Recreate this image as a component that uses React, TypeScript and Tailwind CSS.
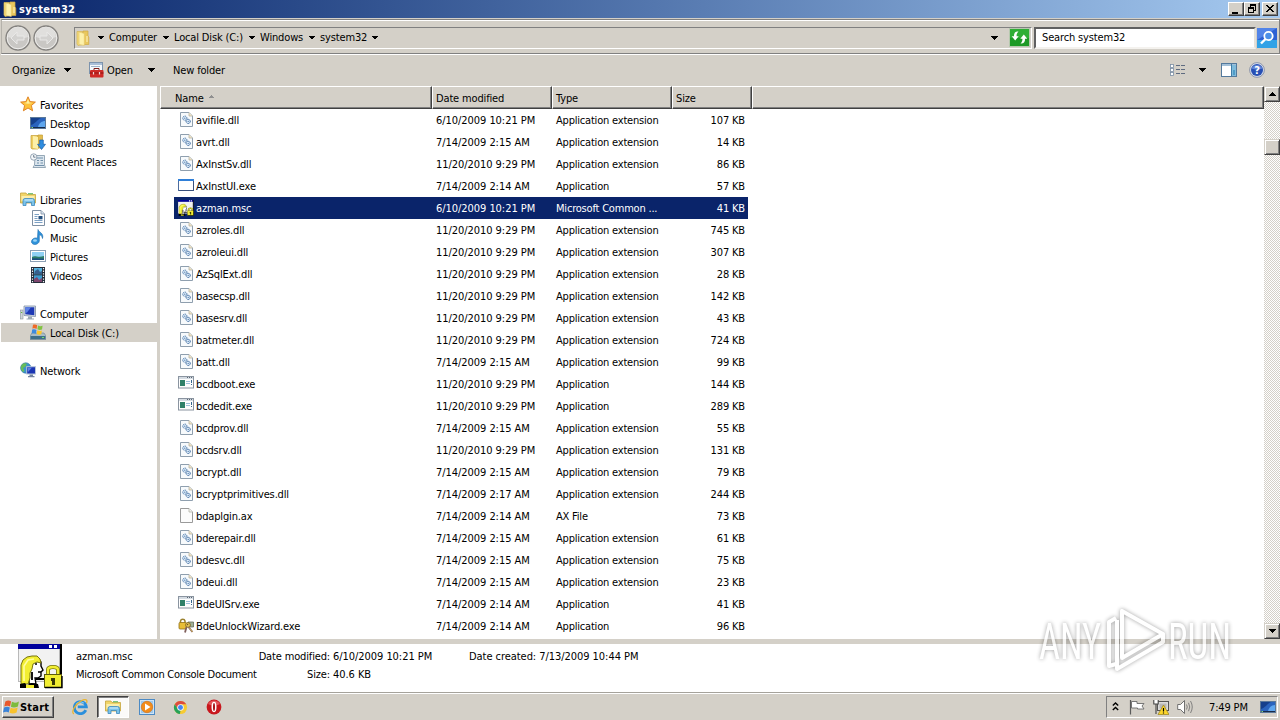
import type { ReactNode } from "react";

type FileKind = "dll" | "window" | "console" | "msc" | "blank" | "lock";

type FileRow = {
  name: string;
  date: string;
  type: string;
  size: string;
  kind: FileKind;
  selected?: boolean;
};

const EXT = "Application extension";
const APP = "Application";

const files: FileRow[] = [
  { name: "avifile.dll", date: "6/10/2009 10:21 PM", type: EXT, size: "107 KB", kind: "dll" },
  { name: "avrt.dll", date: "7/14/2009 2:15 AM", type: EXT, size: "14 KB", kind: "dll" },
  { name: "AxInstSv.dll", date: "11/20/2010 9:29 PM", type: EXT, size: "86 KB", kind: "dll" },
  { name: "AxInstUI.exe", date: "7/14/2009 2:14 AM", type: APP, size: "57 KB", kind: "window" },
  { name: "azman.msc", date: "6/10/2009 10:21 PM", type: "Microsoft Common ...", size: "41 KB", kind: "msc", selected: true },
  { name: "azroles.dll", date: "11/20/2010 9:29 PM", type: EXT, size: "745 KB", kind: "dll" },
  { name: "azroleui.dll", date: "11/20/2010 9:29 PM", type: EXT, size: "307 KB", kind: "dll" },
  { name: "AzSqlExt.dll", date: "11/20/2010 9:29 PM", type: EXT, size: "28 KB", kind: "dll" },
  { name: "basecsp.dll", date: "11/20/2010 9:29 PM", type: EXT, size: "142 KB", kind: "dll" },
  { name: "basesrv.dll", date: "11/20/2010 9:29 PM", type: EXT, size: "43 KB", kind: "dll" },
  { name: "batmeter.dll", date: "11/20/2010 9:29 PM", type: EXT, size: "724 KB", kind: "dll" },
  { name: "batt.dll", date: "7/14/2009 2:15 AM", type: EXT, size: "99 KB", kind: "dll" },
  { name: "bcdboot.exe", date: "11/20/2010 9:29 PM", type: APP, size: "144 KB", kind: "console" },
  { name: "bcdedit.exe", date: "11/20/2010 9:29 PM", type: APP, size: "289 KB", kind: "console" },
  { name: "bcdprov.dll", date: "7/14/2009 2:15 AM", type: EXT, size: "55 KB", kind: "dll" },
  { name: "bcdsrv.dll", date: "11/20/2010 9:29 PM", type: EXT, size: "131 KB", kind: "dll" },
  { name: "bcrypt.dll", date: "7/14/2009 2:15 AM", type: EXT, size: "79 KB", kind: "dll" },
  { name: "bcryptprimitives.dll", date: "7/14/2009 2:17 AM", type: EXT, size: "244 KB", kind: "dll" },
  { name: "bdaplgin.ax", date: "7/14/2009 2:14 AM", type: "AX File", size: "73 KB", kind: "blank" },
  { name: "bderepair.dll", date: "7/14/2009 2:15 AM", type: EXT, size: "61 KB", kind: "dll" },
  { name: "bdesvc.dll", date: "7/14/2009 2:15 AM", type: EXT, size: "75 KB", kind: "dll" },
  { name: "bdeui.dll", date: "7/14/2009 2:15 AM", type: EXT, size: "23 KB", kind: "dll" },
  { name: "BdeUISrv.exe", date: "7/14/2009 2:14 AM", type: APP, size: "41 KB", kind: "console" },
  { name: "BdeUnlockWizard.exe", date: "7/14/2009 2:14 AM", type: APP, size: "96 KB", kind: "lock" },
];

function Icon({ size = 16, children }: { size?: number; children: ReactNode }) {
  return (
    <svg width={size} height={size} viewBox="0 0 16 16" className="block shrink-0">
      {children}
    </svg>
  );
}

function Down({ w = 7 }: { w?: number }) {
  return (
    <svg width={w} height={4} viewBox="0 0 7 4" className="block shrink-0" shapeRendering="crispEdges">
      <path d="M0 0H7V1H6V2H5V3H4V4H3V3H2V2H1V1H0Z" fill="#000" />
    </svg>
  );
}

/* ---------- file icons ---------- */

function MscIcon({ size }: { size: number }) {
  return (
    <svg width={size} height={size} viewBox="0 0 45 45" className="block shrink-0">
      <rect x="0" y="0" width="43" height="38" fill="#b9b9b9" />
      <rect x="1" y="5" width="40" height="32" fill="#f2f2f2" />
      <rect x="0" y="0" width="43" height="5" fill="#00009c" />
      <path d="M31 1H34V4H31ZM36 1H39V4H36Z" fill="#fff" />
      <path d="M42 0H44V38H42Z" fill="#000" />
      <path d="M13 18L20 15L23 18V22L25 26L23 28V32L20 34H17L18 40H11V28Z" fill="#fff" stroke="#000" strokeWidth="1.4" />
      <path d="M17 20H19M20 28H23" stroke="#000" strokeWidth="1.4" />
      <path
        d="M3 40V21L5 16L9 13L14 12H19L22 15L23 19L19 18L15 20L14 25L12 29V34L10 40Z"
        fill="#f2ee32"
        stroke="#77750d"
        strokeWidth="1"
      />
      <path d="M6 37V22L10 16L16 15" fill="none" stroke="#fffda0" strokeWidth="1.6" />
      <path d="M18 35H27M14 28V36" stroke="#000" strokeWidth="1.8" />
      <path d="M2 40L7 39L9 42L13 39L20 40L21 44H2Z" fill="#000" />
      <path d="M8 41H16V44H8Z" fill="#f2ee32" />
      <path d="M30 31V26Q30 23 35 23Q40 23 40 26V31" fill="none" stroke="#77750d" strokeWidth="4" />
      <path d="M30 31V26Q30 23 35 23Q40 23 40 26V31" fill="none" stroke="#f2ee32" strokeWidth="2.4" />
      <rect x="26.5" y="30.5" width="17" height="13" fill="#f2ee32" stroke="#5c5a0a" />
      <path d="M27 43.5H44V32" fill="none" stroke="#000" strokeWidth="1.4" />
      <path d="M33 34H37V41H34V37H33Z" fill="#3c3b06" />
    </svg>
  );
}

function FileIcon({ kind }: { kind: FileKind }) {
  if (kind === "dll") {
    return (
      <Icon>
        <path d="M2.5 .5H11L14.5 4V14.5H2.5Z" fill="#f7fafc" stroke="#8f9fae" />
        <path d="M11 .5V4H14.5" fill="#f3e6c4" stroke="#b7b3a4" strokeWidth=".8" />
        <circle cx="6.8" cy="6.2" r="2.1" fill="#dcebf8" stroke="#4674a8" strokeWidth="1" strokeDasharray="1.2 .6" />
        <circle cx="10.2" cy="9.4" r="2.1" fill="#dcebf8" stroke="#2f5f9a" strokeWidth="1" strokeDasharray="1.2 .6" />
        <circle cx="6.8" cy="6.2" r=".6" fill="#4674a8" />
        <circle cx="10.2" cy="9.4" r=".6" fill="#4674a8" />
      </Icon>
    );
  }
  if (kind === "blank") {
    return (
      <Icon>
        <path d="M2.5 .5H11L14.5 4V14.5H2.5Z" fill="#fcfcfc" stroke="#9a9a9a" />
        <path d="M11 .5V4H14.5" fill="#f4f4f0" stroke="#b3b3a8" strokeWidth=".8" />
      </Icon>
    );
  }
  if (kind === "window") {
    return (
      <Icon>
        <rect x=".5" y="1.5" width="15" height="11" fill="#fff" stroke="#4d6c9e" />
        <rect x="0" y="1" width="16" height="2" fill="#2f7fd8" />
        <path d="M1 12.5H15.5V3" fill="none" stroke="#39507c" />
      </Icon>
    );
  }
  if (kind === "console") {
    return (
      <Icon>
        <rect x=".5" y=".5" width="15" height="11.5" fill="#fdfdfd" stroke="#8a94a0" />
        <rect x="1" y="1" width="14" height="2" fill="#d4dbe2" />
        <path d="M9 1.5H10M11 1.5H12M13 1.5H14" stroke="#5c6672" />
        <rect x="2" y="4" width="5" height="6" fill="#2f8068" />
        <path d="M8 5.5H12M8 7.5H12" stroke="#9cc0da" />
        <path d="M13.5 4V7M13.5 8V9" stroke="#33658c" />
      </Icon>
    );
  }
  if (kind === "lock") {
    return (
      <Icon>
        <path d="M2.5 5V3A2.3 2.3 0 0 1 7 3V5" fill="none" stroke="#9b8230" strokeWidth="1.5" />
        <rect x="1" y="4.5" width="7.5" height="6.5" rx="1" fill="#e8bd36" stroke="#91701a" strokeWidth=".8" />
        <path d="M10 4H15.5V9H10Z" fill="#9fb097" stroke="#56604f" strokeWidth=".7" />
        <circle cx="10" cy="7" r="2.4" fill="#e2c35a" stroke="#795c18" strokeWidth=".8" />
        <circle cx="9.6" cy="6.6" r=".7" fill="#5f4510" />
        <path d="M8.5 9L7 14.5M10.5 9L14.5 14" stroke="#80605c" strokeWidth="1.8" fill="none" />
        <path d="M11 9.5L14.5 14" stroke="#e2c35a" strokeWidth=".8" />
      </Icon>
    );
  }
  return <MscIcon size={16} />;
}

/* ---------- shell icons ---------- */

function FolderIcon({ size = 16 }: { size?: number }) {
  return (
    <Icon size={size}>
      <path d="M2 1.5H7.5V14.5L3 15.5L2 14Z" fill="#f5dc7c" stroke="#d4b454" strokeWidth=".7" />
      <path d="M8 1H13V6L13.8 7V14.5H8Z" fill="#e9c75c" stroke="#cfa945" strokeWidth=".7" />
      <path d="M4 2L9.3 3.4V15.6L4 14.4Z" fill="#fdf1ab" stroke="#e0c468" strokeWidth=".6" />
      <path d="M11.5 6H12.5V12H11.5Z" fill="#fff6c6" />
    </Icon>
  );
}

function StarIcon() {
  return (
    <Icon>
      <path
        d="M8 .8L10.1 5.6L15.4 6.1L11.4 9.5L12.6 14.8L8 12L3.4 14.8L4.6 9.5L.6 6.1L5.9 5.6Z"
        fill="#fdc23a"
        stroke="#dd7a1c"
        strokeWidth=".9"
      />
      <path d="M8 3L9.3 6.6L12.6 7L8 7.8L4 7L6.7 6.5Z" fill="#fff0a0" />
    </Icon>
  );
}

function DesktopIcon() {
  return (
    <Icon>
      <rect x=".5" y="2.5" width="15" height="11" fill="#2a63bd" stroke="#5b7899" />
      <path d="M1 3H11C7 5 5 9 1 10Z" fill="#16408c" />
      <path d="M8 12C9 8 12 6 15 6V12Z" fill="#5fa6ee" />
      <path d="M1 12.5H15" stroke="#172a49" />
      <path d="M1.5 12.5H3" stroke="#7fd37f" />
    </Icon>
  );
}

function DownloadsIcon() {
  return (
    <Icon>
      <path d="M1 1.5H8V15H2L1 14Z" fill="#f0cf62" stroke="#c49d35" strokeWidth=".7" />
      <path d="M8 1H12.5V14H8Z" fill="#e4bd4e" stroke="#c49d35" strokeWidth=".7" />
      <path d="M3 2L8 3V15L3 14Z" fill="#fdf0a8" />
      <path d="M9.7 6H13.3V10.3H15.5L11.5 15.5L7.5 10.3H9.7Z" fill="#2f8de0" stroke="#1b5da8" strokeWidth=".7" />
    </Icon>
  );
}

function RecentIcon() {
  return (
    <Icon>
      <path d="M5 2.5H14.5V12L15.5 14.5H3L4.5 12Z" fill="#dce6ee" stroke="#7f94a6" strokeWidth=".8" />
      <path d="M7 5H13M7 7.5H9M10.5 7.5H13M7 10H9M10.5 10H13M5 12.5H14" stroke="#7190aa" strokeWidth="1.1" />
      <circle cx="3.7" cy="4" r="3.2" fill="#f5f8fa" stroke="#8093a4" strokeWidth=".8" />
      <path d="M3.7 2V4.2H5.5" stroke="#4b5f75" strokeWidth=".8" fill="none" />
    </Icon>
  );
}

function LibrariesIcon({ size = 16 }: { size?: number }) {
  return (
    <Icon size={size}>
      <path d="M.5 2H6L7 3.5H15.5V12H.5Z" fill="#f1d569" stroke="#c5a33e" strokeWidth=".8" />
      <path d="M1.5 5H14.5V10H1.5Z" fill="#fbedab" />
      <path d="M8 2.7H13" stroke="#6fbf6f" strokeWidth="1.2" />
      <path d="M3 14.5V9.5Q3 7.5 5 7.5H12.5Q14.5 7.5 14.5 9.5V14.5H11.5V11.5H6V14.5Z" fill="#7cc3ea" stroke="#3d89bd" strokeWidth=".8" />
      <path d="M4.5 9H13" stroke="#d5effc" />
    </Icon>
  );
}

function DocumentsIcon() {
  return (
    <Icon>
      <path d="M2.5 .5H11L14.5 4V15.5H2.5Z" fill="#fdfdfe" stroke="#7d8fa3" />
      <path d="M11 .5V4H14.5" fill="#d8e3ee" stroke="#7d8fa3" strokeWidth=".8" />
      <path d="M4.5 4.5H9M4.5 6.5H7.5M4.5 8.5H7.5M4.5 10.5H12.5M4.5 12.5H12.5" stroke="#7ba0c4" />
      <rect x="8.5" y="6" width="4" height="3.3" fill="#24507e" />
    </Icon>
  );
}

function MusicIcon() {
  return (
    <Icon>
      <path d="M8 .5C9 3.5 14 4 12.5 9.5C12 6.5 10.5 6 9.3 5.8V12A4 3.2 -20 1 1 7.5 9.2Z" fill="#2f93db" stroke="#1a68ab" strokeWidth=".6" />
      <ellipse cx="5" cy="11.5" rx="2" ry="1.3" fill="#9bd4f7" />
    </Icon>
  );
}

function PicturesIcon() {
  return (
    <Icon>
      <rect x=".5" y="2.5" width="15" height="11" fill="#fff" stroke="#8ca0b5" />
      <rect x="2" y="4" width="12" height="8" fill="#8fd0f3" />
      <path d="M2 9C5 7 8 10 14 8V12H2Z" fill="#2c7d68" />
      <path d="M2 10.5C6 9.5 9 11 14 10.5V12H2Z" fill="#1c4f80" />
    </Icon>
  );
}

function VideosIcon() {
  return (
    <Icon>
      <rect x="1" y="0" width="14" height="16" fill="#232c38" />
      <rect x="4" y="1" width="8" height="6.3" fill="#56b3df" />
      <rect x="4" y="8.3" width="8" height="6.7" fill="#3f9cd0" />
      <path d="M5 4L8 2L10 5L12 4V7H4Z" fill="#365f8c" />
      <path d="M4 12L7 10L9 13L12 11V15H4Z" fill="#7d466e" />
      <path d="M2.5 1V16M13.5 1V16" stroke="#f1f4f7" strokeWidth="1.2" strokeDasharray="1.3 1.3" />
    </Icon>
  );
}

function ComputerIcon() {
  return (
    <Icon>
      <rect x="0.3" y="5" width="2.7" height="9" fill="#cfd5d8" stroke="#8b959c" strokeWidth=".6" />
      <path d="M1 7.5H2.2" stroke="#5fb43b" strokeWidth="1.2" />
      <path d="M4 1H15.5V11.5L4 10.5Z" fill="#d8dfe6" stroke="#7f8fa6" strokeWidth=".8" />
      <path d="M5.3 2.3H14.3V10.2L5.3 9.3Z" fill="#1d38b5" />
      <path d="M5.3 2.3H11L7 7.5L5.3 8Z" fill="#5d82e6" />
      <path d="M8 11.5H12V13.5H14V14.5H6.5V13.5H8Z" fill="#9aa8b5" />
    </Icon>
  );
}

function DiskIcon() {
  return (
    <Icon>
      <path d="M2 9H14L16 12V15.5H0V12Z" fill="#a9bcc7" stroke="#6c808e" strokeWidth=".6" />
      <rect x=".5" y="12" width="15" height="3.2" fill="#3f6f89" />
      <rect x="12" y="13" width="2" height="1" fill="#74e06c" />
      <path d="M3 .8C4.6 .2 6 .3 7.2 1.2L6.6 5C5.3 4.2 4 4.1 2.4 4.7Z" fill="#ee6a28" />
      <path d="M8 1.5C9.5 2.4 11 2.4 12.6 1.7L12 5.5C10.4 6.2 9 6.1 7.4 5.3Z" fill="#82c341" />
      <path d="M2.2 5.6C3.8 5 5.2 5.1 6.5 6L5.9 9.8C4.5 9 3.2 9 1.6 9.5Z" fill="#3d8bdf" />
      <path d="M7.3 6.3C8.8 7.1 10.3 7.1 11.9 6.4L11.3 10.2C9.7 10.9 8.2 10.8 6.7 10Z" fill="#fbc62b" />
    </Icon>
  );
}

function NetworkIcon() {
  return (
    <Icon>
      <circle cx="5.8" cy="6" r="5.2" fill="#3a94cd" stroke="#2a6b9d" strokeWidth=".6" />
      <path d="M2 2.5C4 .5 6 1 7 2L5 5L3 6L4.5 9L3 10C1 8.5 0 5 2 2.5Z" fill="#67bd5a" />
      <rect x="6.7" y="4.7" width="8.8" height="7.3" fill="#1c36b4" stroke="#b8c6d8" strokeWidth="1" />
      <path d="M7.5 5.5H12L8 10Z" fill="#5c80e4" />
      <path d="M9.5 12.5H13V14H14.5V15.2H8V14H9.5Z" fill="#7485a0" />
    </Icon>
  );
}

function WindowsFlag() {
  return (
    <svg width="17" height="17" viewBox="0 0 16 16" className="block shrink-0">
      <path d="M2.2 2.4C4.2 1.2 6 1.3 7.6 2.3L6.6 7C5 6 3.2 6 1.2 7.1Z" fill="#e8582c" />
      <path d="M8.4 2.7C10.4 3.8 12.4 3.7 15 2.3L14 7C11.6 8.3 9.4 8.3 7.4 7.3Z" fill="#7dbb3c" />
      <path d="M1 8C3 6.9 4.8 7 6.4 7.9L5.4 12.6C3.8 11.7 2 11.7 0 12.8Z" fill="#3a83d8" />
      <path d="M7.2 8.2C9.2 9.3 11.3 9.2 13.8 7.9L12.8 12.6C10.4 13.9 8.2 13.9 6.2 12.9Z" fill="#f8c22c" />
    </svg>
  );
}

/* ---------- window chrome ---------- */

function CaptionButton({ children }: { children: ReactNode }) {
  return (
    <button className="flex h-[14px] w-4 items-center justify-center border border-t-white border-l-white border-r-[#404040] border-b-[#404040] bg-[#d4d0c8] shadow-[inset_-1px_-1px_0_#808080]">
      <svg width="12" height="11" viewBox="0 0 12 11" shapeRendering="crispEdges" fill="#000">
        {children}
      </svg>
    </button>
  );
}

function TitleBar() {
  return (
    <div className="flex h-[18px] shrink-0 items-center bg-linear-to-r from-[#0a246a] to-[#a6caf0] px-[2px]">
      <FolderIcon />
      <span className="ml-[1px] flex-1 pt-[2px] text-[11px] font-bold tracking-[0.32px] text-white">system32</span>
      <div className="flex">
        <CaptionButton>
          <path d="M2 8H8V10H2Z" />
        </CaptionButton>
        <CaptionButton>
          <path d="M4 0H10V7H8V6H9V2H5V3H4ZM2 3H8V9H2ZM3 5V8H7V5Z" fillRule="evenodd" />
        </CaptionButton>
        <div className="ml-[2px]">
          <CaptionButton>
            <path d="M2 1H4V2H5V3H7V2H8V1H10V2H9V3H8V4H7V5H8V6H9V7H10V8H8V7H7V6H5V7H4V8H2V7H3V6H4V5H5V4H4V3H3V2H2Z" />
          </CaptionButton>
        </div>
      </div>
    </div>
  );
}

function NavCircle({ flip }: { flip?: boolean }) {
  return (
    <svg width="28" height="28" viewBox="0 0 28 28" className="block shrink-0">
      <circle cx="14" cy="14" r="12" fill="#c9c7c4" stroke="#84827f" strokeWidth="1.4" />
      <circle cx="14" cy="14" r="10.8" fill="none" stroke="#efeeec" strokeWidth="1" />
      <path d="M4 13A10 10 0 0 1 24 13C18 15 10 15 4 13Z" fill="#e0dfdd" />
      <path
        d={flip ? "M21 14L15 8V12H8V16H15V20Z" : "M7 14L13 8V12H20V16H13V20Z"}
        fill="#d3d2d0"
        stroke="#e9e8e7"
        strokeWidth="1"
      />
    </svg>
  );
}

const crumbs = [
  { label: "Computer", width: "w-[54px]" },
  { label: "Local Disk (C:)", width: "w-[75px]" },
  { label: "Windows", width: "w-[49px]" },
  { label: "system32", width: "w-[52px]" },
];

function AddressBar() {
  return (
    <div className="mt-[1px] ml-[1px] flex h-[35px] shrink-0 items-center border border-t-[#808080] border-l-[#b5b2ab] border-r-[#808080] border-b-[#808080] pt-[2px] pl-[2px] shadow-[inset_0_1px_0_#fff,0_1px_0_#fff]">
      <NavCircle />
      <NavCircle flip />
      <div className="ml-[14px] flex h-[22px] w-[958px] items-center border border-t-[#808080] border-l-[#808080] border-r-white border-b-white">
        <FolderIcon />
        <div className="ml-[7px] flex flex-1 items-center">
          <Down w={6} />
          {crumbs.map((c) => (
            <div key={c.label} className="flex items-center">
              <span className={`ml-[5px] whitespace-nowrap ${c.width}`}>{c.label}</span>
              <Down w={6} />
            </div>
          ))}
        </div>
        <Down />
        <svg width="21" height="19" viewBox="0 0 21 19" className="mr-[1px] ml-[11px] block">
          <rect x=".5" y=".5" width="20" height="18" fill="#2fae35" stroke="#b5c9ae" />
          <rect x="1" y="10" width="19" height="8" fill="#1d9a26" />
          <path d="M9.5 3.5C6.5 3 4.7 5 5 8.2H2.7L6.2 12.5L9.7 8.2H7.6C7.5 6 8 5 9.5 3.5Z" fill="#fff" />
          <path d="M11.5 15.5C14.5 16 16.3 14 16 10.8H18.3L14.8 6.5L11.3 10.8H13.4C13.5 13 13 14 11.5 15.5Z" fill="#fff" />
        </svg>
      </div>
      <div className="ml-[2px] flex h-[22px] w-[222px] items-center border-2 border-t-[#606060] border-l-[#606060] border-r-[#e4e1da] border-b-[#f4f2ee] bg-white pl-[6px]">
        Search system32
      </div>
      <svg width="20" height="20" viewBox="0 0 20 20" className="ml-[1px] block">
        <rect width="20" height="20" fill="#2d60d4" />
        <rect y="12" width="20" height="8" fill="#31a2e6" />
        <path d="M0 0H20L0 12Z" fill="#5284e8" />
        <circle cx="11.5" cy="8" r="4.2" fill="#4b8fe8" stroke="#fff" strokeWidth="1.8" />
        <path d="M8.5 11L4 15.5" stroke="#fff" strokeWidth="2.4" />
      </svg>
    </div>
  );
}

function CommandBar() {
  return (
    <div className="flex h-[32px] shrink-0 items-center pr-[15px] pl-3">
      <span className="w-[52px] pt-[2px]">Organize</span>
      <Down />
      <div className="ml-[17px]">
        <Icon>
          <rect x="1.5" y=".5" width="13" height="11" fill="#f5f8fb" stroke="#7c93ad" />
          <rect x="2" y="1" width="12" height="2" fill="#a9bfd8" />
          <path d="M3 4.5H12" stroke="#9db3ca" />
          <path d="M6 8.5V6.5H11V8.5" stroke="#7d1a17" fill="none" strokeWidth="1" />
          <rect x="2" y="8" width="13.5" height="7.5" rx="1" fill="#cf2a26" />
          <path d="M2 11H15.5" stroke="#8d1310" />
          <path d="M5.5 10V12.5M11.5 10V12.5" stroke="#f2d7d5" strokeWidth="1.2" />
        </Icon>
      </div>
      <span className="ml-[3px] w-[41px] pt-[2px]">Open</span>
      <Down />
      <span className="ml-[18px] flex-1 pt-[2px]">New folder</span>
      <Icon>
        <g fill="#fff" stroke="#7b8ea5" strokeWidth=".8">
          <rect x=".5" y="2.5" width="3" height="3" />
          <rect x=".5" y="6.5" width="3" height="3" />
          <rect x=".5" y="10.5" width="3" height="3" />
        </g>
        <path d="M6 3.5H10M6 7.5H10M6 11.5H10M11 3.5H15M11 7.5H15M11 11.5H15" stroke="#5e6b80" />
      </Icon>
      <div className="ml-[13px]">
        <Down />
      </div>
      <div className="ml-[15px]">
        <Icon>
          <rect x=".5" y="1.5" width="15" height="13" fill="#fff" stroke="#53799c" />
          <path d="M1 3H15" stroke="#a3c0d8" strokeWidth="2" />
          <rect x="10" y="3" width="5" height="11" fill="#7fbbdb" />
          <path d="M10.5 2V14" stroke="#3e7ca8" />
          <path d="M12 8H14V13H12Z" fill="#4f9cc8" />
        </Icon>
      </div>
      <div className="ml-3">
        <svg width="16" height="16" viewBox="0 0 16 16" className="block">
          <circle cx="8" cy="8" r="7.4" fill="#d6dcea" stroke="#7b869f" strokeWidth=".8" />
          <circle cx="8" cy="8" r="6" fill="#274fb4" />
          <path d="M2.5 6.5A6 6 0 0 1 13.5 6.5C10 8 6 8 2.5 6.5Z" fill="#6186d8" />
          <text x="8" y="12" textAnchor="middle" fontSize="11" fontWeight="bold" fill="#fff">
            ?
          </text>
        </svg>
      </div>
    </div>
  );
}

/* ---------- navigation pane ---------- */

function NavGroup({ icon, label, children }: { icon: ReactNode; label: string; children?: ReactNode }) {
  return (
    <div className="mb-[19px]">
      <div className="flex h-[19px] items-center gap-[4px] pb-px pl-5">
        {icon}
        <span className="pt-[3px]">{label}</span>
      </div>
      {children}
    </div>
  );
}

function NavItem({ icon, label, active }: { icon: ReactNode; label: string; active?: boolean }) {
  return (
    <div className={`ml-[1px] flex h-[19px] items-center gap-[4px] pb-px pl-[29px] ${active ? "bg-[#d4d0c8]" : ""}`}>
      {icon}
      <span className="pt-[3px]">{label}</span>
    </div>
  );
}

function Sidebar() {
  return (
    <div className="w-[160px] shrink-0 border-r-[3px] border-[#d4d0c8] bg-white pt-[9px]">
      <NavGroup icon={<StarIcon />} label="Favorites">
        <NavItem icon={<DesktopIcon />} label="Desktop" />
        <NavItem icon={<DownloadsIcon />} label="Downloads" />
        <NavItem icon={<RecentIcon />} label="Recent Places" />
      </NavGroup>
      <NavGroup icon={<LibrariesIcon />} label="Libraries">
        <NavItem icon={<DocumentsIcon />} label="Documents" />
        <NavItem icon={<MusicIcon />} label="Music" />
        <NavItem icon={<PicturesIcon />} label="Pictures" />
        <NavItem icon={<VideosIcon />} label="Videos" />
      </NavGroup>
      <NavGroup icon={<ComputerIcon />} label="Computer">
        <NavItem icon={<DiskIcon />} label="Local Disk (C:)" active />
      </NavGroup>
      <NavGroup icon={<NetworkIcon />} label="Network" />
    </div>
  );
}

/* ---------- file list ---------- */

function HeaderCell({ className, children }: { className: string; children?: ReactNode }) {
  return (
    <div
      className={`flex h-full items-center border border-t-white border-l-white border-r-[#404040] border-b-[#404040] pt-[2px] shadow-[inset_-1px_-1px_0_#808080] ${className}`}
    >
      {children}
    </div>
  );
}

function FileList() {
  return (
    <div className="flex min-w-0 flex-1 flex-col bg-white">
      <div className="flex h-[23px] shrink-0 bg-[#d4d0c8]">
        <HeaderCell className="w-[272px] pl-[14px]">
          Name
          <svg width="5" height="3" viewBox="0 0 5 3" className="mb-[5px] ml-[5px]" shapeRendering="crispEdges">
            <path d="M2 0H3V1H4V2H5V3H0V2H1V1H2Z" fill="#909090" />
          </svg>
        </HeaderCell>
        <HeaderCell className="w-[120px] pl-[3px]">Date modified</HeaderCell>
        <HeaderCell className="w-[120px] pl-[3px]">Type</HeaderCell>
        <HeaderCell className="w-[80px] pl-[3px]">Size</HeaderCell>
        <HeaderCell className="flex-1" />
      </div>
      <div className="pl-[14px]">
        {files.map((f) => (
          <div
            key={f.name}
            className={`flex h-[22px] w-[574px] items-center pr-[3px] pl-[4px] whitespace-nowrap ${
              f.selected ? "bg-[#0a246a] text-white" : ""
            }`}
          >
            <FileIcon kind={f.kind} />
            <span className="ml-[2px] w-[240px] pt-[2px]">{f.name}</span>
            <span className="w-[120px] pt-[2px] tracking-[-0.05px]">{f.date}</span>
            <span className="w-[120px] pt-[2px] tracking-[-0.2px]">{f.type}</span>
            <span className="flex-1 pt-[2px] text-right">{f.size}</span>
          </div>
        ))}
      </div>
    </div>
  );
}

function ScrollButton({ up }: { up?: boolean }) {
  return (
    <div className="flex h-4 shrink-0 items-center justify-center border border-t-[#d4d0c8] border-l-[#d4d0c8] border-r-[#404040] border-b-[#404040] bg-[#d4d0c8] shadow-[inset_1px_1px_0_#fff,inset_-1px_-1px_0_#808080]">
      <div className={up ? "rotate-180" : ""}>
        <Down />
      </div>
    </div>
  );
}

function Scrollbar() {
  return (
    <div className="flex w-4 shrink-0 flex-col bg-[#e9e7e3] bg-[repeating-conic-gradient(#fff_0_25%,#d4d0c8_0_50%)] bg-size-[2px_2px]">
      <ScrollButton up />
      <div className="h-[37px]" />
      <div className="h-4 border border-t-[#d4d0c8] border-l-[#d4d0c8] border-r-[#404040] border-b-[#404040] bg-[#d4d0c8] shadow-[inset_1px_1px_0_#fff,inset_-1px_-1px_0_#808080]" />
      <div className="flex-1" />
      <ScrollButton />
    </div>
  );
}

/* ---------- details pane ---------- */

function DetailsPane() {
  return (
    <div className="flex h-[53px] shrink-0 border-t-[5px] border-[#d4d0c8] bg-white pl-[18px] leading-[18px] whitespace-nowrap">
      <MscIcon size={45} />
      <div className="ml-[13px] w-[180px] pt-[4px] tracking-[-0.27px]">
        <div className="tracking-[0px]">azman.msc</div>
        <div>Microsoft Common Console Document</div>
      </div>
      <div className="w-[74px] pt-[4px] text-right">
        <div>Date modified:</div>
        <div>Size:</div>
      </div>
      <div className="ml-[3px] w-[136px] pt-[4px] tracking-[-0.05px]">
        <div>6/10/2009 10:21 PM</div>
        <div>40.6 KB</div>
      </div>
      <div className="pt-[4px] tracking-[-0.05px]">Date created: 7/13/2009 10:44 PM</div>
    </div>
  );
}

/* ---------- taskbar ---------- */

function Taskbar() {
  return (
    <div className="flex h-[28px] shrink-0 items-center border-t border-[#a5a29b] bg-[#d4d0c8] px-[2px] pt-[1px] shadow-[inset_0_1px_0_#fff]">
      <button className="flex h-[22px] w-[52px] items-center border border-t-white border-l-white border-r-[#404040] border-b-[#404040] text-[11px] font-bold tracking-[0.2px] shadow-[inset_-1px_-1px_0_#808080]">
        <WindowsFlag />
        <span className="pt-[2px]">Start</span>
      </button>
      <div className="ml-[18px]">
        <Icon>
          <path d="M13.8 11.2A6 6 0 1 1 14.3 7.8H5.8" fill="none" stroke="#2a8fdc" strokeWidth="2.8" />
          <path d="M4 5.3A5.5 5.5 0 0 1 12 4.2" stroke="#8bd0f8" strokeWidth="1" fill="none" />
          <path d="M2 14.8C-1.5 14 3 5.2 9 2C13.5 -.5 16 .7 14.5 4" fill="none" stroke="#eab52f" strokeWidth="1.3" />
        </Icon>
      </div>
      <div className="ml-[9px] flex h-[22px] w-[32px] items-center justify-center border border-t-[#404040] border-l-[#404040] border-r-white border-b-white bg-[#fbfaf9] shadow-[inset_1px_1px_0_#808080]">
        <LibrariesIcon />
      </div>
      <div className="ml-[10px]">
        <Icon>
          <rect x=".5" y=".5" width="15" height="15" fill="#cde4f7" stroke="#4c8ac4" />
          <rect x="2" y="2" width="12" height="12" fill="#9fc8ea" />
          <circle cx="8" cy="8" r="5.7" fill="#f28c1b" stroke="#d56d0b" strokeWidth=".6" />
          <path d="M6 4.5L11.5 8L6 11.5Z" fill="#fff" />
        </Icon>
      </div>
      <div className="ml-[18px]">
        <Icon size={15}>
          <circle cx="8" cy="8" r="7" fill="#f7cb32" />
          <path d="M1.9 4.5A7 7 0 0 1 14.1 4.5H8L5 9.7Z" fill="#dd4b3e" />
          <path d="M1.9 4.5L5 9.7L8 11.5L7.3 15A7 7 0 0 1 1.9 4.5Z" fill="#26a25a" />
          <circle cx="8" cy="8" r="3.5" fill="#f4f6f8" />
          <circle cx="8" cy="8" r="2.6" fill="#4285f4" />
        </Icon>
      </div>
      <div className="ml-[18px] flex-1">
        <Icon>
          <circle cx="8" cy="8" r="7.4" fill="#c8171d" />
          <path d="M2 5A7 7 0 0 1 14 5C10 7 6 7 2 5Z" fill="#e4555a" />
          <ellipse cx="8" cy="8" rx="2.5" ry="5.2" fill="#fff" />
          <ellipse cx="8" cy="8" rx="1" ry="4.1" fill="#a70f14" />
        </Icon>
      </div>
      <div className="flex h-[22px] w-[172px] items-center border border-t-[#808080] border-l-[#808080] border-r-white border-b-white pl-[5px]">
        <svg width="7" height="9" viewBox="0 0 7 9" fill="none" stroke="#000" strokeWidth="1.4" className="mb-[2px]">
          <path d="M.8 3.6L3.5 1L6.2 3.6M.8 8L3.5 5.4L6.2 8" />
        </svg>
        <div className="ml-[10px]">
          <Icon>
            <path d="M1.5 1V15.5" stroke="#5b5b5b" strokeWidth="1.2" />
            <path d="M2.5 2.5H8V4.5H15L13 7L15 10H8.5V9H2.5Z" fill="#fff" stroke="#6b6b6b" strokeWidth=".9" />
          </Icon>
        </div>
        <div className="ml-[8px]">
          <Icon>
            <rect x="4.5" y="2.5" width="11" height="9" fill="#dcdcdc" stroke="#555" />
            <path d="M.8 1V5H5.2V1M3 5V15" fill="#fff" stroke="#444" strokeWidth="1.1" />
            <rect x="6.5" y="4.5" width="7" height="5" fill="#b8b8b8" />
            <path d="M10.5 6L16 15.5H5Z" fill="#fcd62b" stroke="#98811b" strokeWidth=".7" />
            <path d="M10.5 9V12.5M10.5 13.4V14.6" stroke="#000" strokeWidth="1.2" />
          </Icon>
        </div>
        <div className="ml-[8px]">
          <Icon>
            <path d="M.7 5.5H3.5L7.5 1.5V14.5L3.5 10.5H.7Z" fill="#fff" stroke="#636363" strokeWidth=".9" />
            <path d="M9.5 5.5Q11 8 9.5 10.5M11.5 3.8Q14 8 11.5 12.2M13.5 2Q17 8 13.5 14" fill="none" stroke="#777" strokeWidth=".9" />
          </Icon>
        </div>
        <span className="ml-4 w-[51px] pt-[2px] whitespace-nowrap">7:49 PM</span>
        <DesktopIcon />
      </div>
    </div>
  );
}

function Watermark() {
  return (
    <svg
      width="206"
      height="80"
      viewBox="0 0 206 80"
      className="pointer-events-none absolute top-[602px] left-[1032px] opacity-75 drop-shadow-[0_0_2px_rgba(0,0,0,0.5)]"
    >
      <g fill="#fff" fontFamily="Roboto, sans-serif" fontSize="50">
        <text x="7" y="57" textLength="62" lengthAdjust="spacingAndGlyphs">
          ANY
        </text>
        <text x="136" y="57" textLength="63" lengthAdjust="spacingAndGlyphs">
          RUN
        </text>
      </g>
      <g fill="none" stroke="#fff" strokeWidth="4" strokeLinejoin="round">
        <path d="M90 9V56L131 32Z" />
        <path d="M84 16L77 20V64L84 62M85 18V67L131 40V32" />
      </g>
    </svg>
  );
}

export default function App() {
  return (
    <div className="relative flex h-[720px] w-[1280px] cursor-default flex-col overflow-hidden bg-[#d4d0c8] font-['DejaVu_Sans_Condensed','DejaVu_Sans',sans-serif] text-[11px] leading-[14px] tracking-[-0.15px] text-black [font-stretch:condensed]">
      <TitleBar />
      <AddressBar />
      <CommandBar />
      <div className="flex min-h-0 flex-1">
        <Sidebar />
        <FileList />
        <Scrollbar />
      </div>
      <DetailsPane />
      <Taskbar />
      <Watermark />
    </div>
  );
}
